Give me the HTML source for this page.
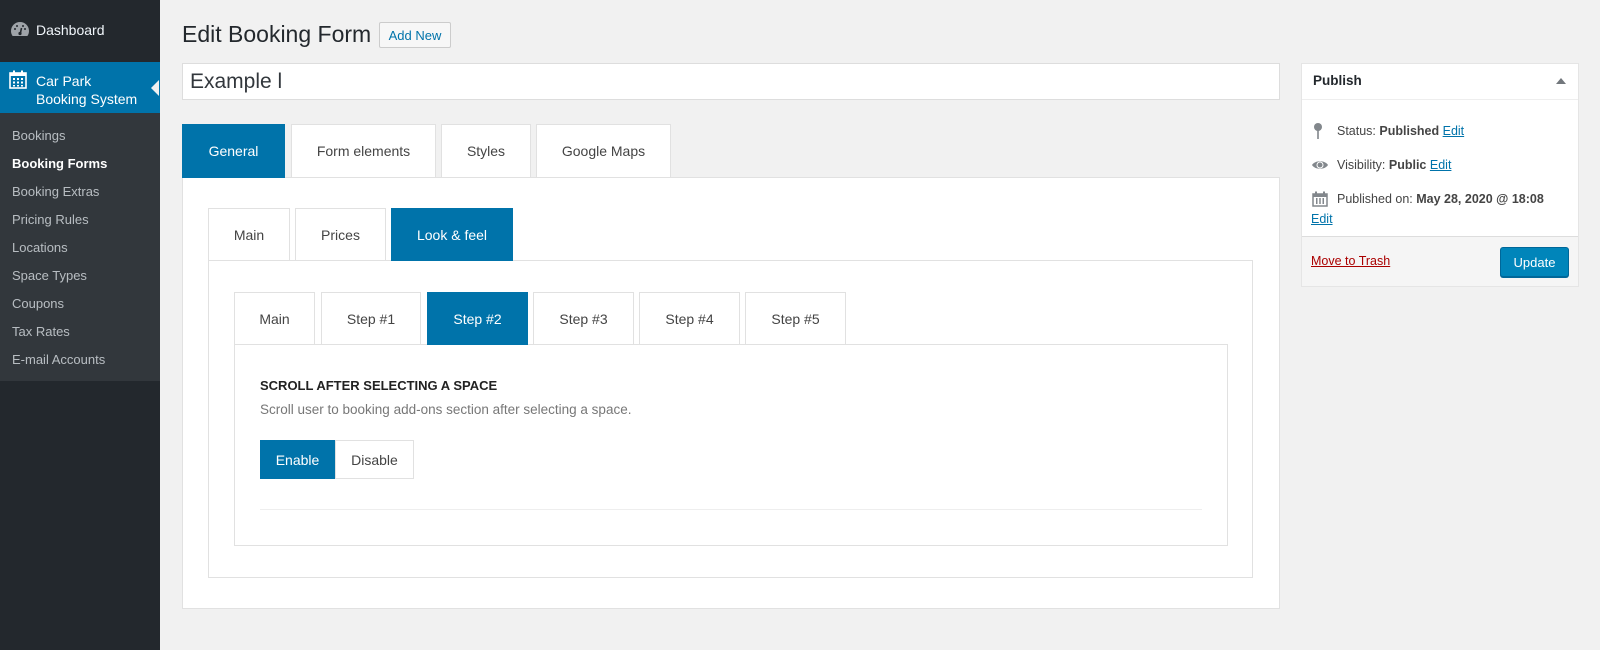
<!DOCTYPE html>
<html><head><meta charset="utf-8"><style>
*{box-sizing:border-box;margin:0;padding:0}
body{width:1600px;height:650px;background:#f1f1f1;font-family:"Liberation Sans",Arial,sans-serif;position:relative;overflow:hidden;color:#23282d}
.abs{position:absolute}
#side{left:0;top:0;width:160px;height:650px;background:#23282d}
#sub{left:0;top:113px;width:160px;height:268px;background:#32373c}
.mi{position:absolute;left:12px;font-size:13px;color:rgba(240,245,250,.7)}
.box{position:absolute;background:#fff;border:1px solid #e1e1e1}
.tab{position:absolute;background:#fff;border:1px solid #e1e1e1;font-size:14px;color:#444;display:flex;align-items:center;justify-content:center}
.tab.on{background:#0073aa;color:#fff;border-color:#0073aa}
a{color:#0073aa;text-decoration:underline}
</style></head><body>
<div id="side" class="abs"></div>
<div id="sub" class="abs"></div>
<svg class="abs" style="left:10px;top:20px" width="20" height="18" viewBox="0 0 20 18"><path d="M10 2a9 9 0 0 0-9 9c0 2 .6 3.6 1.6 5h14.8c1-1.4 1.6-3 1.6-5a9 9 0 0 0-9-9z" fill="#9ea3a8"/><path d="M10 15l1.5-7" stroke="#23282d" stroke-width="1.6"/><circle cx="10" cy="13.5" r="1.6" fill="#23282d"/><circle cx="5" cy="9" r="1" fill="#23282d"/><circle cx="15" cy="9" r="1" fill="#23282d"/><circle cx="7" cy="6" r="1" fill="#23282d"/><circle cx="13" cy="6" r="1" fill="#23282d"/></svg>
<div class="abs" style="left:36px;top:22px;font-size:14px;color:#f0f5fa">Dashboard</div>
<div class="abs" style="left:0;top:62px;width:160px;height:51px;background:#0073aa"></div>
<div class="abs" style="left:151px;top:80px;width:0;height:0;border:8px solid transparent;border-right-color:#f1f1f1;border-left:none"></div>
<svg class="abs" style="left:9px;top:70px" width="18" height="19" viewBox="0 0 18 19"><rect x="1" y="3" width="16" height="15" fill="none" stroke="#fff" stroke-width="1.6"/><rect x="1" y="3" width="16" height="3" fill="#fff"/><rect x="4" y="0.5" width="2" height="4" fill="#fff"/><rect x="12" y="0.5" width="2" height="4" fill="#fff"/><g fill="#fff"><rect x="4" y="8" width="2" height="2"/><rect x="8" y="8" width="2" height="2"/><rect x="12" y="8" width="2" height="2"/><rect x="4" y="11.5" width="2" height="2"/><rect x="8" y="11.5" width="2" height="2"/><rect x="12" y="11.5" width="2" height="2"/><rect x="4" y="15" width="2" height="1.5"/><rect x="8" y="15" width="2" height="1.5"/><rect x="12" y="15" width="2" height="1.5"/></g></svg>
<div class="abs" style="left:36px;top:72px;font-size:14px;color:#fff;line-height:18px">Car Park<br>Booking System</div>
<div class="mi" style="top:128px">Bookings</div>
<div class="mi" style="top:156px;color:#fff;font-weight:bold">Booking Forms</div>
<div class="mi" style="top:184px">Booking Extras</div>
<div class="mi" style="top:212px">Pricing Rules</div>
<div class="mi" style="top:240px">Locations</div>
<div class="mi" style="top:268px">Space Types</div>
<div class="mi" style="top:296px">Coupons</div>
<div class="mi" style="top:324px">Tax Rates</div>
<div class="mi" style="top:352px">E-mail Accounts</div>

<div class="abs" style="left:182px;top:21px;font-size:23px;color:#23282d">Edit Booking Form</div>
<div class="abs" style="left:379px;top:22px;width:72px;height:26px;border:1px solid #ccc;background:#f7f7f7;color:#0073aa;font-size:13px;display:flex;align-items:center;justify-content:center;border-radius:2px">Add New</div>
<div class="box" style="left:182px;top:63px;width:1098px;height:37px;border-color:#ddd"></div>
<div class="abs" style="left:190px;top:70px;font-size:21px;color:#32373c">Example l</div>

<div class="box" style="left:182px;top:177px;width:1098px;height:432px"></div>
<div class="tab on" style="left:182px;top:124px;width:103px;height:54px">General</div>
<div class="tab" style="left:291px;top:124px;width:145px;height:54px">Form elements</div>
<div class="tab" style="left:441px;top:124px;width:90px;height:54px">Styles</div>
<div class="tab" style="left:536px;top:124px;width:135px;height:54px">Google Maps</div>

<div class="box" style="left:208px;top:260px;width:1045px;height:318px"></div>
<div class="tab" style="left:208px;top:208px;width:82px;height:53px">Main</div>
<div class="tab" style="left:295px;top:208px;width:91px;height:53px">Prices</div>
<div class="tab on" style="left:391px;top:208px;width:122px;height:53px">Look &amp; feel</div>

<div class="box" style="left:234px;top:344px;width:994px;height:202px"></div>
<div class="tab" style="left:234px;top:292px;width:81px;height:53px">Main</div>
<div class="tab" style="left:321px;top:292px;width:100px;height:53px">Step #1</div>
<div class="tab on" style="left:427px;top:292px;width:101px;height:53px">Step #2</div>
<div class="tab" style="left:533px;top:292px;width:101px;height:53px">Step #3</div>
<div class="tab" style="left:639px;top:292px;width:101px;height:53px">Step #4</div>
<div class="tab" style="left:745px;top:292px;width:101px;height:53px">Step #5</div>

<div class="abs" style="left:260px;top:378px;font-size:13px;font-weight:bold;color:#222">SCROLL AFTER SELECTING A SPACE</div>
<div class="abs" style="left:260px;top:402px;font-size:13.5px;color:#777">Scroll user to booking add-ons section after selecting a space.</div>
<div class="abs" style="left:260px;top:440px;width:75px;height:39px;background:#0073aa;color:#fff;font-size:14px;display:flex;align-items:center;justify-content:center">Enable</div>
<div class="abs" style="left:335px;top:440px;width:79px;height:39px;border:1px solid #e1e1e1;background:#fff;color:#444;font-size:14px;display:flex;align-items:center;justify-content:center">Disable</div>
<div class="abs" style="left:260px;top:509px;width:942px;height:1px;background:#eee"></div>

<div class="box" style="left:1301px;top:63px;width:278px;height:224px;border-color:#e5e5e5"></div>
<div class="abs" style="left:1302px;top:99px;width:276px;height:1px;background:#eee"></div>
<div class="abs" style="left:1313px;top:73px;font-size:13.5px;font-weight:bold;color:#23282d">Publish</div>
<div class="abs" style="left:1556px;top:78px;width:0;height:0;border:5px solid transparent;border-bottom:6px solid #72777c;border-top:none"></div>
<svg class="abs" style="left:1313px;top:122px" width="10" height="18" viewBox="0 0 10 18"><circle cx="5" cy="5" r="4" fill="#82878c"/><rect x="4.2" y="6" width="1.6" height="11" fill="#82878c"/></svg>
<div class="abs" style="left:1337px;top:124px;font-size:12.5px;color:#444">Status: <b>Published</b> <a>Edit</a></div>
<svg class="abs" style="left:1311px;top:159px" width="18" height="12" viewBox="0 0 18 12"><path d="M1 6C4 1 14 1 17 6 14 11 4 11 1 6z" fill="#82878c"/><circle cx="9" cy="6" r="3.5" fill="#fff"/><circle cx="9" cy="6" r="2.5" fill="#82878c"/></svg>
<div class="abs" style="left:1337px;top:158px;font-size:12.5px;color:#444">Visibility: <b>Public</b> <a>Edit</a></div>
<svg class="abs" style="left:1312px;top:191px" width="16" height="16" viewBox="0 0 16 16"><rect x="1" y="3" width="14" height="12" fill="none" stroke="#82878c" stroke-width="1.5"/><rect x="1" y="3" width="14" height="3" fill="#82878c"/><rect x="3" y="0.5" width="2" height="4" fill="#82878c"/><rect x="11" y="0.5" width="2" height="4" fill="#82878c"/><g fill="#82878c"><rect x="4" y="7" width="1.5" height="6"/><rect x="7.25" y="7" width="1.5" height="6"/><rect x="10.5" y="7" width="1.5" height="6"/></g></svg>
<div class="abs" style="left:1337px;top:192px;font-size:12.5px;color:#444">Published on: <b>May 28, 2020 @ 18:08</b></div>
<div class="abs" style="left:1311px;top:212px;font-size:12.5px"><a>Edit</a></div>
<div class="abs" style="left:1302px;top:236px;width:276px;height:50px;background:#f5f5f5;border-top:1px solid #ddd"></div>
<div class="abs" style="left:1311px;top:254px;font-size:12.5px"><a style="color:#a00">Move to Trash</a></div>
<div class="abs" style="left:1500px;top:247px;width:69px;height:30px;background:#0085ba;border:1px solid #006799;border-radius:3px;color:#fff;font-size:13px;display:flex;align-items:center;justify-content:center;box-shadow:0 1px 0 #006799">Update</div>
</body></html>
